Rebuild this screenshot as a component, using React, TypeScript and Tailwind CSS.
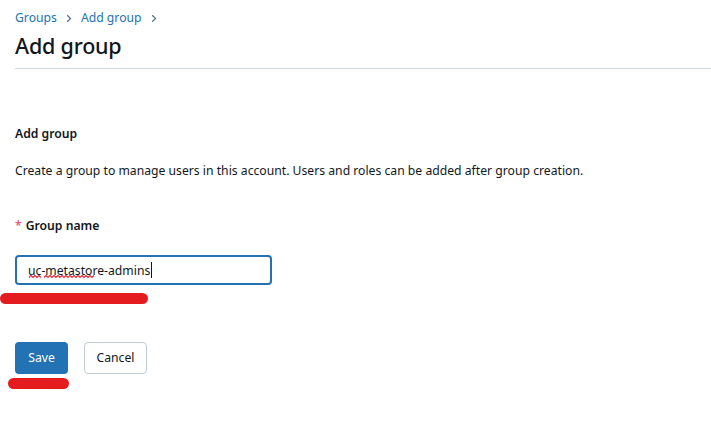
import React, { useState } from 'react';

const font = { fontFamily: '"Noto Sans", "Open Sans", sans-serif' };

const Chevron: React.FC = () => (
  <svg className="h-[9px] w-[6px] text-[#5f7281]" viewBox="0 0 6 9" fill="none">
    <path d="M1.2 1.2 4.5 4.5 1.2 7.8" stroke="currentColor" strokeWidth="1.3" />
  </svg>
);

// zig-zag path for spell-check underline
const squiggle = (x: number, w: number) => {
  let d = `M${x} 2.5`;
  for (let i = 0; i < Math.floor(w / 2); i++) d += ` l2 ${i % 2 === 0 ? -2 : 2}`;
  return d;
};

const App: React.FC = () => {
  const [name, setName] = useState('uc-metastore-admins');

  return (
    <div className="min-h-[447px] w-[711px] bg-white text-[#11171c]" style={font}>
      {/* Header */}
      <div className="pl-[15px] pt-[8px]">
        <nav className="flex items-center gap-[9px] text-[12.2px] leading-[20px] text-[#2272b4]">
          <span>Groups</span>
          <Chevron />
          <span>Add group</span>
          <Chevron />
        </nav>
        <h1 className="mt-[4px] text-[21.5px] font-medium leading-[28px] tracking-[-0.2px]">Add group</h1>
        <div className="mt-[8px] h-px bg-[#d1d9e1]" />
      </div>

      {/* Form */}
      <div className="px-[15px]">
        <h2 className="mt-[55px] text-[12.2px] font-semibold leading-[20px]">Add group</h2>
        <p className="mt-[17px] text-[12.2px] leading-[20px]">
          Create a group to manage users in this account. Users and roles can be added after group creation.
        </p>

        <label className="mt-[35px] flex items-center gap-[4px] text-[12.2px] font-semibold leading-[20px]">
          <span className="text-[#e65b77]">*</span>
          Group name
        </label>

        <div className="relative mt-[19px] w-[257px]">
          <input
            value={name}
            onChange={(e) => setName(e.target.value)}
            spellCheck={false}
            className="block h-[30px] w-full rounded-[4px] border-2 border-[#2272b4] px-[11px] text-[12.2px] text-[#11171c] outline-none"
            style={font}
          />
          {/* spell-check squiggles and caret */}
          <svg className="pointer-events-none absolute left-0 top-[20px] h-[4px] w-[90px]" viewBox="0 0 90 4" fill="none">
            <path d={squiggle(14, 12)} stroke="#e0303a" strokeWidth="1.2" />
            <path d={squiggle(29, 50)} stroke="#e0303a" strokeWidth="1.2" />
          </svg>
          <div className="pointer-events-none absolute left-[136px] top-[7px] h-[16px] w-px bg-[#11171c]" />
          {/* annotation */}
          <div className="absolute left-[-15px] top-[38px] h-[11px] w-[148px] rounded-full bg-[#e51c1f]" />
        </div>

        <div className="mt-[57px] flex gap-[16px]">
          <div className="relative">
            <button className="h-[32px] w-[53px] rounded-[4px] bg-[#2272b4] text-[12.2px] text-white">Save</button>
            <div className="absolute left-[-7px] top-[36px] h-[11px] w-[61px] rounded-full bg-[#e51c1f]" />
          </div>
          <button className="h-[32px] w-[63px] rounded-[4px] border border-[#c0cdd8] bg-white text-[12.2px] text-[#11171c]">
            Cancel
          </button>
        </div>
      </div>
    </div>
  );
};

export default App;
